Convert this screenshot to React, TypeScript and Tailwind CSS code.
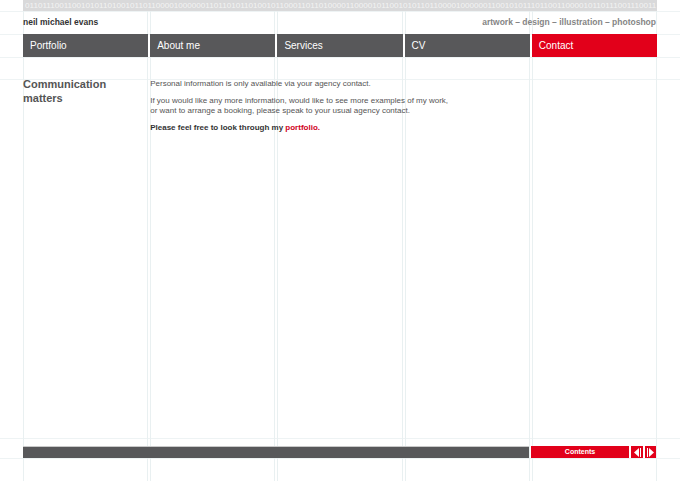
const binary = 'neil michael evans'
  .split('')
  .map((c) => c.charCodeAt(0).toString(2).padStart(8, '0'))
  .join('');

const navItems = ['Portfolio', 'About me', 'Services', 'CV', 'Contact'];

function Guides() {
  // faint layout guides behind the page
  return (
    <div className="pointer-events-none absolute inset-0">
      <div className="absolute left-0 right-0 top-[11px] h-px bg-[#eef3f4]" />
      <div className="absolute left-0 right-0 top-[34px] h-px bg-[#eef3f4]" />
      <div className="absolute left-0 right-0 top-[57px] h-px bg-[#eef3f4]" />
      <div className="absolute left-0 right-0 top-[79px] h-px bg-[#eef3f4]" />
      <div className="absolute left-0 right-0 top-[438px] h-px bg-[#eef3f4]" />
      <div className="absolute left-0 right-0 top-[458px] h-px bg-[#eef3f4]" />
      <div className="absolute inset-y-0 left-[23px] grid w-[634px] grid-cols-5 gap-[2px]">
        {navItems.map((n) => (
          <div key={n} className="border-x border-[#e9f0f1]" />
        ))}
      </div>
    </div>
  );
}

export default function App() {
  return (
    <div className="relative h-[481px] w-[680px] overflow-hidden bg-white font-['Liberation_Sans',Arial,sans-serif]">
      <Guides />
      <div className="relative flex h-full w-[634px] flex-col ml-[23px]">
        {/* binary strip */}
        <div className="h-[11px] overflow-hidden whitespace-nowrap bg-[#d9d9da] pl-[2px] text-[8.1px] leading-[11px] text-[#f3f3f3]">
          {binary}
        </div>

        {/* header */}
        <div className="flex h-[23px] items-center justify-between text-[8.5px] font-bold">
          <span className="text-[#333]">neil michael evans</span>
          <span className="pr-px text-[#858585]">artwork – design – illustration – photoshop</span>
        </div>

        {/* nav */}
        <div className="grid h-[23px] grid-cols-5 gap-[2px]">
          {navItems.map((n) => (
            <div
              key={n}
              className={
                n === 'Contact'
                  ? 'flex items-center bg-[#e2001a] pl-[7px] text-[10px] text-white'
                  : 'flex items-center bg-[#58585a] pl-[7px] text-[10px] text-white'
              }
            >
              {n}
            </div>
          ))}
        </div>

        {/* content */}
        <div className="mt-[20px] grid grid-cols-5 gap-[2px]">
          <h1 className="text-[11px] font-bold leading-[14px] text-[#555]">
            Communication
            <br />
            matters
          </h1>
          <div className="col-span-3 pt-[2px] text-[8px] leading-[10px] text-[#555]">
            <p>Personal information is only available via your agency contact.</p>
            <p className="mt-[7px]">
              If you would like any more information, would like to see more examples of my work,
              <br />
              or want to arrange a booking, please speak to your usual agency contact.
            </p>
            <p className="mt-[7px] font-bold text-[#333]">
              Please feel free to look through my <span className="text-[#d0001a]">portfolio.</span>
            </p>
          </div>
        </div>

        <div className="flex-1" />

        {/* footer */}
        <div className="mb-[23px] flex h-[12px] gap-[2px]">
          <div className="w-[506px] border-t border-[#c9c9c9] bg-[#58585a]" />
          <div className="flex w-[98px] items-center justify-center bg-[#e2001a] text-[7px] font-bold text-white">
            Contents
          </div>
          <div className="flex w-[12px] items-center justify-center bg-[#e2001a]">
            <svg width="7" height="9" viewBox="0 0 7 9">
              <polygon points="5,0 5,9 0,4.5" fill="#fff" />
              <rect x="6" y="0" width="1" height="9" fill="#fff" />
            </svg>
          </div>
          <div className="flex w-[11px] items-center justify-center bg-[#e2001a]">
            <svg width="7" height="9" viewBox="0 0 7 9">
              <rect x="0" y="0" width="1" height="9" fill="#fff" />
              <polygon points="2,0 2,9 7,4.5" fill="#fff" />
            </svg>
          </div>
        </div>
      </div>
    </div>
  );
}
